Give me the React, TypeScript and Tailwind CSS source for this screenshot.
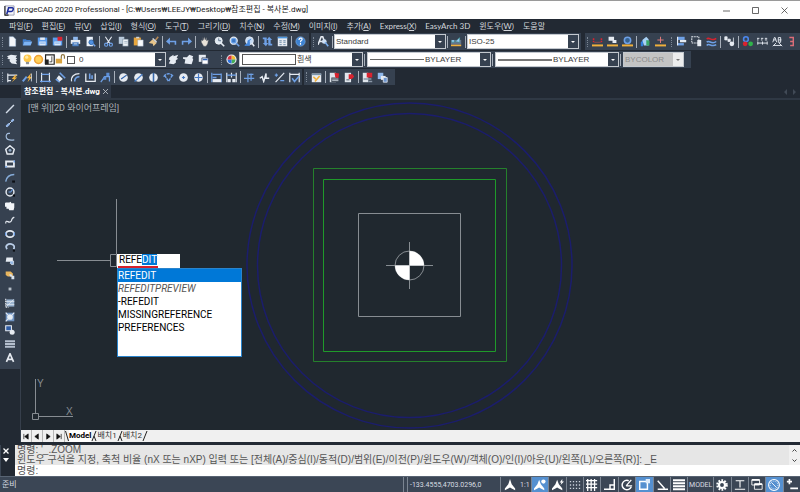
import { Fragment, useEffect, useRef } from "react";
import type { ReactNode } from "react";

const L = "#e6ebf2";
const B = "#6ea0e6";
const Y = "#f0b03c";
const R = "#d8232f";

// 14x14 glyphs, stroked by default
const glyphs: Record<string, ReactNode> = {
  new: <path d="M3 1h5l3 3v9H3z" fill="#f4f7fb" stroke="#b8d4f5" strokeWidth=".6" />,
  open: <><path d="M1 4h4l1 1h5v2H3l-2 5z" fill="#3f7fd0" /><path d="M3 7h10l-2 5H1z" fill="#7db4f5" /></>,
  save: <><path d="M1 2h12v10H1z" fill="#5b9cec" /><path d="M4 2h6v3H4z" fill={L} /><path d="M3 7h8v5H3z" fill="#dbe8f8" /><path d="M4 9h6" stroke="#5b9cec" /></>,
  saveAs: <><path d="M1 2h12v10H1z" fill="#5b9cec" /><path d="M3 7h8v5H3z" fill="#dbe8f8" /><path d="M4 9h6" stroke="#5b9cec" /><path d="M7 1h6v5H7z" fill={R} /></>,
  print: <><path d="M4 1h6v4H4z" fill="#8fb9ee" /><path d="M1 5h12v5H1z" fill={L} /><path d="M3 8h8v5H3z" fill="#4e82c4" /><path d="M5 10h4" stroke={L} /></>,
  preview: <><path d="M2 1h8v12H2z" fill="#e9f1fb" /><circle cx="8" cy="8" r="3" fill="#4f90e2" stroke="#245a9c" /><path d="M10 10l3 3" stroke={B} strokeWidth="2" /></>,
  cut: <><path d="M3 1l6 9M11 1L5 10" stroke={L} strokeWidth="1.4" /><circle cx="4" cy="11" r="2" stroke={B} strokeWidth="1.5" /><circle cx="10" cy="11" r="2" stroke={B} strokeWidth="1.5" /></>,
  copy: <><path d="M1 1h7v9H1z" fill="#b9cadb" /><path d="M6 4h7v9H6z" fill="#edf2f7" stroke="#5c7188" strokeWidth=".6" /><path d="M8 7h4M8 9h4" stroke="#7d93aa" strokeWidth=".7" /></>,
  paste: <><path d="M1 2h9v10H1z" fill="#e8a63e" /><path d="M4 1h4v2H4z" fill="#ccd2d8" /><path d="M6 5h7v8H6z" fill="#f8fafc" stroke="#8aa0b8" strokeWidth=".5" /></>,
  brush: <><path d="M13 1L9 6" stroke="#b88a55" strokeWidth="2" /><path d="M6 4l5 5-4 4-1-3-5-1z" fill="#e7c58a" /><path d="M6 3l5 5" stroke="#d8e0ea" strokeWidth="1.5" /></>,
  undo: <path d="M5 2L0 7l5 4V8h6v3h2V6H5z" fill={B} />,
  redo: <path d="M9 2l5 5-5 4V8H3v3H1V6h8z" fill={B} />,
  pan: <path d="M3 8V5l2 1V2l1 3 1-4 1 4 1.5-3v4L12 5l-1 5-2 3H6z" fill="#e8e2d9" stroke="#565c66" strokeWidth=".5" />,
  zoomRt: <><circle cx="6" cy="6" r="4.5" fill="#dfe8f2" stroke="#f5f8fb" /><path d="M6 3v3h3" stroke="#4b617b" /><path d="M9 9l4 4" stroke={L} strokeWidth="2" /></>,
  zoomWin: <><circle cx="6" cy="6" r="4.5" fill="#6fa7ee" stroke={L} strokeWidth="1.5" /><path d="M4 4h4v4H4z" fill="#3d77c2" /><path d="M9 9l4 4" stroke={B} strokeWidth="2" /></>,
  zoomPrev: <><circle cx="7" cy="6" r="5" fill="#c6dbf4" stroke={L} /><path d="M5 9V6l4-2M1 12l6-5v5z" fill="#4587dd" stroke="#4587dd" /><path d="M10 9l3 4" stroke={L} strokeWidth="2" /></>,
  orbit: <path d="M1 2h5v7h2l-3 4-4-4h2V4H1zM13 12H8V5H6l3-4 4 4h-2v5h2z" fill={B} />,
  table: <><path d="M1 1h12v12H1z" fill={L} /><path d="M1 2h12" stroke="#4b95dd" strokeWidth="2" /><path d="M3 6h3M8 6h3M3 8h3M8 8h3M3 11h3M8 11h3" stroke="#557a9d" /></>,
  help: <><circle cx="7" cy="7" r="6" fill="#3c82d2" stroke="#9bc3f0" strokeWidth=".6" /><path d="M5 5c0-3 4-3 4-1 0 2-2 1-2 4M7 9v2" stroke="#fff" strokeWidth="1.5" /></>,
  textStyle: <><path d="M0 11L4 1h2l3 8M2 7h5" stroke={L} strokeWidth="2" /><circle cx="8" cy="7" r="3" fill="#cfe0f5" /><path d="M9 8l4 5" stroke="#78aef0" strokeWidth="2" /></>,
  dimStyle: <><path d="M0 5h13v6H0z" fill="#64748b" /><path d="M1 5v3h3V5M6 7l5-5v6z" fill="#9cc4f4" stroke="#2a9f8b" strokeWidth=".6" /><path d="M0 12h13" stroke={Y} strokeWidth="2" /></>,
  xline: <><path d="M2 3v5M12 3v5" stroke={R} strokeWidth="2" strokeDasharray="2 1" /><path d="M3 8h8" stroke="#9a4b52" /><path d="M0 12h14" stroke={Y} strokeWidth="2.5" /></>,
  xblock: <><path d="M2 1h7v4h3v4H7V6H2z" fill={L} /><path d="M0 12h14" stroke={Y} strokeWidth="2.5" /></>,
  xring: <><circle cx="7" cy="5.5" r="4" fill="#35618f" stroke={B} strokeWidth="2" /><path d="M0 12h14" stroke={Y} strokeWidth="2.5" /></>,
  house: <><path d="M1 8l3-3v8H1z" fill="#317fdb" /><path d="M3 5l5-4 3 3v8H5z" fill="#a8d1f5" /><path d="M8 5l4 1v6H8z" fill="#3aa76b" /></>,
  xpoint: <><path d="M7 1v8M3 5h8" stroke="#dc7a7a" strokeWidth="1.3" /><path d="M0 12h14" stroke={Y} strokeWidth="2.5" /></>,
  pages: <><path d="M2 1h9v4H2z" fill={B} /><path d="M5 5h8v3H5z" fill={L} /><path d="M2 9h8v3H2z" fill={B} /><path d="M2 1v11" stroke={L} strokeWidth="1.5" /></>,
  group: <><path d="M1 1h9v8H1z" stroke={L} strokeWidth="1.3" strokeDasharray="2 1" /><path d="M8 5h5v8H8z" fill={L} /></>,
  waves: <><path d="M1 4c3-4 6 4 12-1" stroke={R} strokeWidth="2" /><path d="M1 8c3-4 6 4 12-1M1 12c3-4 6 3 12-1" stroke={B} strokeWidth="2" /></>,
  nodes: <><path d="M1 1h3v4H1zM5 4h3v3H5zM12 2v7" fill={L} stroke={L} /><circle cx="10" cy="10" r="3" fill={L} /></>,
  rgb: <><circle cx="5" cy="4" r="3" stroke="#4b87ee" strokeWidth="2" /><circle cx="4" cy="10" r="3" fill={R} /><circle cx="11" cy="10" r="3" fill="#2fb34a" /></>,
  align: <path d="M0 3h3M5 3h3M10 3h3M0 5h2M5 5h2M10 5h3M1 9h12M1 7v4M7 7v4M13 7v4" stroke={L} strokeWidth="1.2" />,
  swap: <path d="M1 8l2-6h1l2 6M2 5h3M8 2h3v6H8zM8 5h4M1 13l4-4M13 13L9 9M2 12h10" stroke={L} strokeWidth="1.2" />,
  hook: <path d="M3 2h5v5H4M8 8v4H4" stroke="#dc6d78" strokeWidth="1.8" />,
  layers: <path d="M0 3l5-2 8 1-2 2 2 2-2 1 2 2-2 1 2 3-7-1-3-3 1-2-4-1 2-1z" fill={L} />,
  bulb: <><circle cx="7" cy="5.5" r="5" fill="#ffc84a" /><circle cx="6" cy="4" r="2" fill="#ffe9a8" /><path d="M5 10h4v3H5z" fill="#8e9297" /></>,
  sun: <circle cx="7" cy="7" r="5" fill="#ffd15b" stroke="#f0a238" strokeWidth="2" />,
  viewport: <><path d="M2 1h11v12H2z" fill="#fff" stroke="#222" strokeWidth="1.5" /><path d="M1 7h5v6H1z" fill="#222" /><path d="M10 3v7H7" stroke="#222" /></>,
  unlock: <><path d="M1 6h8v6H1z" fill="#d9a441" /><path d="M8 6V3c0-3 4-3 4 0v3" stroke="#8e763f" strokeWidth="1.5" /></>,
  layA: <path d="M2 4l5-3v2l6-2-2 4 2 1-3 2v3l-3 2-6-1 2-4-2-1z" fill={L} />,
  layB: <path d="M0 4h5l3-3 5 2-1 2 1 2-2 6-9-1 1-5-3-1z" fill={L} />,
  layC: <><path d="M1 1h9v9H1z" fill={L} /><path d="M5 5h8v8H5z" fill="#fff" stroke="#2e3c58" /><path d="M6 7h6" stroke="#3265b8" strokeWidth="2" /></>,
  color: <><circle cx="7" cy="7" r="6.5" fill="#e9edf1" /><path d="M7 7V2a5 5 0 015 5z" fill="#f4bd31" /><path d="M7 7h5a5 5 0 01-5 5z" fill="#45ad58" /><path d="M7 7v5a5 5 0 01-5-5z" fill="#2e72dc" /><path d="M7 7H2a5 5 0 015-5z" fill="#d63645" /></>,
  dimQuick: <><path d="M1 2v11M1 4h12M1 11h4" stroke={L} strokeWidth="1.5" /><path d="M10 4L6 9h3l-3 4 7-6h-3l3-3z" fill={Y} /></>,
  dimFast: <><path d="M1 12l5-6" stroke={B} strokeWidth="2.5" /><path d="M12 1L6 8h3l-2 5 6-7h-3z" fill={Y} /><path d="M12 2v10" stroke={L} /></>,
  dimLin: <><path d="M2 1v12M12 1v12" stroke={L} strokeWidth="1.5" /><path d="M2 3h10M0 12h14" stroke={B} strokeWidth="1.7" /></>,
  dimAli: <><path d="M1 9l5 4M6 1l7 7" stroke={B} strokeWidth="2" /><path d="M5 4l5 5-4 3-4-4z" fill={L} /></>,
  dimArc: <><path d="M2 12C1 6 5 2 12 2" stroke={L} strokeWidth="1.5" /><path d="M6 12c0-4 2-6 6-6" stroke={B} strokeWidth="2" /></>,
  dimOrd: <><path d="M1 2v10h12V2" stroke={L} strokeWidth="1.6" /><path d="M6 2v7M9 4v5" stroke={B} strokeWidth="2" /></>,
  dimJog: <><path d="M1 13l5-7h6v6" stroke={B} strokeWidth="1.6" /><path d="M8 1h4v4H8zM4 6h4v4H4z" fill="#5d8fd8" /></>,
  diaA: <><circle cx="7" cy="7" r="5.5" fill={L} /><path d="M4 9l7-5" stroke="#2b5fa8" strokeWidth="1.5" /></>,
  diaB: <><circle cx="7" cy="7" r="5.5" fill={L} /><path d="M2 12L12 3" stroke="#4a7fc8" strokeWidth="1.7" /></>,
  diaC: <><circle cx="7" cy="7" r="5.5" fill={L} /><path d="M7 1v12" stroke="#3567aa" strokeWidth="2" /></>,
  angle: <path d="M2 4l5 8 5-8M1 6c2-5 10-5 12 0" stroke={B} strokeWidth="1.8" strokeDasharray="4 1" />,
  center: <><circle cx="7" cy="7" r="5.5" fill={L} /><path d="M7 5v4M5 7h4" stroke="#4679c2" strokeWidth="1.5" /></>,
  cross: <><circle cx="7" cy="7" r="5.5" fill={L} /><path d="M7 2v10M2 7h10" stroke="#4679c2" strokeWidth="1.5" /></>,
  base: <><path d="M1 1v12M13 2v11" stroke={B} strokeWidth="1.5" /><path d="M2 3h11M2 7h5" stroke={B} strokeWidth="1.7" /><path d="M2 9h11v4H2z" fill={L} /></>,
  cont: <><path d="M1 1v12M13 1v12M7 1v6" stroke={L} strokeWidth="1.5" /><path d="M1 4h12" stroke={B} strokeWidth="1.7" /><path d="M2 9h4v4H2zM8 9h4v4H8z" fill={L} /></>,
  brk: <><path d="M0 8h13M5 2v11" stroke={B} strokeWidth="1.5" /><path d="M9 2v9M6 3h6" stroke={B} strokeWidth="1.5" /></>,
  tol: <path d="M1 8l3-2 2 6 3-10v6h4" stroke={L} strokeWidth="1.8" />,
  ratio: <><path d="M2 13L13 1" stroke={L} strokeWidth="1.5" /><path d="M1 4h4M3 2v4M8 11h5" stroke={B} strokeWidth="1.5" /></>,
  inspect: <><path d="M1 1v12M13 1v12M1 3h12" stroke={L} strokeWidth="1.5" /><path d="M4 8l3 4 6-7" stroke={B} strokeWidth="2" /></>,
  note: <><path d="M1 2h12v11H1z" fill={L} /><path d="M1 3h12" stroke="#7a94aa" strokeWidth="2" /><path d="M5 12l6-7M3 6l3 3" stroke={Y} strokeWidth="2" /></>,
  refA: <><path d="M1 1h8v12H1z" fill="#dfe5ec" /><path d="M3 7h10v6H3z" fill="#36404d" /><path d="M7 1l6 1-1 6-4-1z" fill={R} /><path d="M4 9h8M4 11h8" stroke={L} /></>,
  refB: <><path d="M1 1h8v12H1z" fill="#dfe5ec" /><path d="M6 3h5l2 3-3 3H6z" fill={R} /><path d="M3 10h4" stroke="#2d3947" /></>,
  refC: <><path d="M1 1h7v12H1z" fill="#dfe5ec" /><path d="M6 1h7v6H6z" fill={R} /><path d="M2 9h10M8 12h5" stroke="#8b98a8" strokeWidth="2" /></>,
  refD: <><path d="M1 1h7v8H1z" fill="#8fb7ea" /><path d="M5 5h6v5H5z" fill={L} /><path d="M8 7h5v6H8z" fill="#6b94ce" stroke={L} /></>,
  line: <path d="M1.5 12.5L12.5 1.5" stroke="#d3dce8" strokeWidth="2" />,
  ray: <><path d="M1.5 12.5L12.5 1.5" stroke="#c7d3e2" strokeWidth="1.4" /><path d="M9 5l3-3M2 12l4-4" stroke="#93b6e8" strokeWidth="3" /></>,
  pline: <path d="M7 2C2 1 1 5 2 8s4 4 11 3" stroke="#a5bfdf" strokeWidth="1.6" />,
  poly: <><path d="M7 1l6 5-2 6.5H3L1 6z" stroke={L} strokeWidth="2" /><circle cx="7" cy="7.5" r="2" fill="#93acc8" /></>,
  rect: <><path d="M1.5 3.5h11v7h-11z" stroke={L} strokeWidth="2.5" /><path d="M13 2v3M0 11h3" stroke={B} strokeWidth="2" /></>,
  arc: <><path d="M1 12C2 6 6 2 13 2" stroke="#86acd9" strokeWidth="2" /><path d="M10 12h4" stroke="#0c0f14" strokeWidth="3" /></>,
  circle: <><circle cx="7" cy="7" r="5.5" stroke={L} strokeWidth="2" /><path d="M5 7h3l3-4" stroke={B} strokeWidth="1.5" /><path d="M11 12h3" stroke="#0c0f14" strokeWidth="3" /></>,
  cloud: <path d="M1 2h5l2-1 1 2h4v6l-1 4H6l-1-2H2V8H0V3z" fill="#f2f5f9" />,
  spline: <path d="M1 12c0-8 5 2 8-4 1-3 0-3 4-5" stroke={L} strokeWidth="1.7" />,
  ellipse: <><ellipse cx="7" cy="7" rx="5.5" ry="4.5" stroke={L} strokeWidth="2.5" /><path d="M1 5v4M13 5v4" stroke={B} strokeWidth="2" /></>,
  ellArc: <><path d="M3 10C-1 5 5 2 9 3s5 4 3 7" stroke="#b9cde8" strokeWidth="2.5" /><path d="M11 12h3" stroke="#0c0f14" strokeWidth="3" /></>,
  insert: <><path d="M2 2h9v6H1z" fill={L} /><path d="M7 7h5v5H9l-2-2" fill="#95b8e5" stroke={L} /></>,
  block: <><path d="M1 2h7l3 3v4H4L1 7z" fill="#e9b65e" /><path d="M6 6h3l1 2h3v5H9V9H7z" fill="#d8e3ef" /></>,
  point: <path d="M5 5h4v4H5z" fill="#b4bdc8" />,
  hatch: <><path d="M2 2h11v10H2z" fill="#9ab3d1" /><path d="M2 12L12 2M1 5h12M1 9h12" stroke={L} /><path d="M1 1v12h4" stroke={L} strokeWidth="1.5" strokeDasharray="2 1" /></>,
  gradient: <><path d="M1 1h12v12H1z" fill="#6f93c1" /><circle cx="7" cy="7" r="4" fill="#e5ecf4" /><path d="M1 1l3 3M13 1l-3 3M1 13l3-3" stroke={L} strokeWidth="1.5" /></>,
  region: <><path d="M1 1h8v7H1z" fill="#2f5da6" stroke={L} strokeWidth="1.5" /><circle cx="10" cy="10" r="3.5" fill={L} /></>,
  grid: <path d="M0 3h14M0 7h14M0 11h14" stroke="#b5c0cf" strokeWidth="2.8" />,
  text: <path d="M2 12.5L7 1l5 11.5M4 9h6" stroke={L} strokeWidth="2.3" />,
  north: <path d="M7 0l2 6 4 5v2l-4-2-2-1-2 1-4 2v-2l4-5z" fill="#fff" />,
  northDot: <><path d="M6 1l2 5 4 5v2l-4-2-2-1-2 1-4 2v-2l4-5z" fill="#fff" /><circle cx="11" cy="3" r="2.5" fill="#fff" /></>,
  northBolt: <><path d="M6 1l2 5 4 5v2l-4-2-2-1-2 1-4 2v-2l4-5z" fill="#fff" /><path d="M12 0L9 4h2l-1 3 4-4h-2z" fill="#fff" /></>,
  dots: <path d="M1 3h12M1 7h12M1 11h12" stroke="#cbd2dc" strokeWidth="1.5" strokeDasharray="1.5 2" />,
  mesh: <path d="M2 0v14M6 0v14M10 0v14M0 2h13M0 6h13M0 10h13" stroke="#fff" strokeWidth="1.5" />,
  ortho: <path d="M12 0v12H0M7 12V7h5" stroke="#fff" strokeWidth="1.7" />,
  polar: <><path d="M9 2a5.5 5.5 0 103 7" stroke="#fff" strokeWidth="1.7" /><path d="M6 8l6-7M6 8h7" stroke="#fff" strokeWidth="1.5" /></>,
  snap: <><path d="M2 3h9v9H2z" stroke="#fff" strokeWidth="1.7" /><path d="M9 0h5v5H9z" fill="#dcebfb" /></>,
  track: <path d="M2 2l8 9M2 12h12" stroke="#fff" strokeWidth="1.7" />,
  weight: <path d="M0 1.5h14M0 5h14M0 8.5h14M0 12h14" stroke="#fff" strokeWidth="2.3" />,
  gear: <><circle cx="7" cy="7" r="5.5" stroke="#fff" strokeWidth="2.5" strokeDasharray="2 1.5" /><circle cx="7" cy="7" r="3.5" stroke="#fff" strokeWidth="2.5" /></>,
  tee: <path d="M2 2h10M7 2v8M1 12h12" stroke="#fff" strokeWidth="1.3" />,
  windows: <><path d="M1 1h9v6H1zM4 6h9v6H4z" fill="#364252" stroke="#fff" /><path d="M1 1h9M4 6h9" stroke="#fff" strokeWidth="2" /></>,
  clock: <><circle cx="7" cy="7" r="6.3" stroke="#fff" strokeWidth="1.2" /><circle cx="7" cy="7" r="4.5" stroke="#fff" strokeDasharray="1 1.5" /><path d="M4 4l6 6" stroke="#fff" /></>,
  plusBar: <path d="M4 0v6M1 3h6M5 11h9" stroke="#fff" strokeWidth="2" />,
};

const Icon = ({ name, className = "size-3" }: { name: string; className?: string }) => (
  <svg viewBox="0 0 14 14" fill="none" className={`shrink-0 ${className}`} aria-hidden="true">
    {glyphs[name]}
  </svg>
);

const Sep = () => <span className="mx-px h-3 w-px shrink-0 bg-[#a7afba]" />;

const Grip = () => (
  <span className="mx-0.5 h-2.5 w-0 shrink-0 border-l border-dotted border-[#7c8795]" />
);

// "|" is a separator, everything else a glyph name
const Tools = ({ items }: { items: string }) => (
  <>
    {items.split(" ").map((item, i) =>
      item === "|" ? (
        <Sep key={i} />
      ) : (
        <button key={i} type="button" aria-label={item} className="flex w-[15px] shrink-0 justify-center">
          <Icon name={item} className="size-[11px]" />
        </button>
      )
    )}
  </>
);

const Panel = ({ children, className = "" }: { children: ReactNode; className?: string }) => (
  <div className={`flex h-full shrink-0 items-center bg-[#364150] ${className}`}>{children}</div>
);

interface ComboProps {
  label: string;
  value: string;
  className: string;
  before?: ReactNode;
  disabled?: boolean;
}

const Combo = ({ label, value, className, before, disabled }: ComboProps) => (
  <div
    className={`relative flex h-[15px] shrink-0 items-center border border-[#c3c8ce] ${className} ${
      disabled ? "bg-[#c4c4c4] text-[#8d8d8d]" : "bg-white text-[#3a3a3a]"
    }`}
  >
    {before}
    <select
      aria-label={label}
      disabled={disabled}
      className="h-full min-w-0 flex-1 appearance-none pl-px font-['Liberation_Sans','Noto_Sans_CJK_KR',sans-serif] text-[8px] leading-[13px] outline-none"
    >
      <option>{value}</option>
    </select>
    <span
      className={`pointer-events-none flex h-full w-[10px] shrink-0 items-center justify-center ${
        disabled ? "bg-[#ededed] text-[#777]" : "bg-[#364150] text-white"
      }`}
    >
      <svg viewBox="0 0 4 2" className="h-0.5 w-1" fill="currentColor"><path d="M0 0h4L2 2z" /></svg>
    </span>
  </div>
);

const menus = [
  ["파일", "F"], ["편집", "E"], ["뷰", "V"], ["삽입", "I"], ["형식", "O"],
  ["도구", "T"], ["그리기", "D"], ["치수", "N"], ["수정", "M"], ["이미지", "I"],
  ["추가", "A"], ["Express", "X"], ["EasyArch 3D", ""], ["윈도우", "W"], ["도움말", ""],
];

const drawTools =
  "line ray pline poly rect arc circle cloud spline ellipse ellArc insert block point hatch gradient region grid text".split(" ");

const TitleBar = () => (
  <header className="flex h-[19px] items-center border-t border-[#9a9a9a] bg-white text-[#222]">
    <svg viewBox="0 0 12 12" className="mr-0.5 ml-1 size-[11px]" fill="none">
      <path d="M1 1h10v10H1z" fill="#f4f4f8" stroke="#9a9db0" />
      <path d="M3 10L5 3h4c2 0 1 4-1 4H4" stroke="#1c2c9c" strokeWidth="1.7" />
      <path d="M1 1v10h4" stroke="#222" strokeWidth="1.2" />
    </svg>
    <h1 className="text-[8px] leading-3">progeCAD 2020 Professional - [C:₩Users₩LEEJY₩Desktop₩참조편집 - 복사본.dwg]</h1>
    <div className="ml-auto flex pr-px">
      {["M0 4h7", "M.5 .5h6v6h-6z", "M.5 .5l6 6M6.5 .5l-6 6"].map((d, i) => (
        <button key={d} type="button" aria-label={["Minimize", "Maximize", "Close"][i]} className="flex w-[29px] justify-center">
          <svg viewBox="0 0 7 7" className="size-[7px]" fill="none" stroke="#444" strokeWidth=".8"><path d={d} /></svg>
        </button>
      ))}
    </div>
  </header>
);

const MenuBar = () => (
  <nav className="flex h-[14px] items-center gap-[9px] pl-[9px] font-['Lato','Noto_Sans_CJK_KR',sans-serif] text-[8px] leading-[10px] text-[#d3d7dc]">
    {menus.map(([name, key]) => (
      <button key={name} type="button" className="whitespace-nowrap">
        {name}
        {key && <>(<u>{key}</u>)</>}
      </button>
    ))}
  </nav>
);

const Toolbars = () => (
  <div className="flex flex-col gap-px">
    <div className="flex h-[17px]">
      <Panel className="w-[309px]">
        <Grip />
        <Tools items="new open save saveAs | print preview | cut copy paste brush | undo redo | pan zoomRt zoomWin zoomPrev | orbit table | help" />
      </Panel>
      <Panel className="ml-0.5 w-[270px]">
        <Grip />
        <Tools items="textStyle |" />
        <Combo label="Text style" value="Standard" className="w-[112px]" />
        <Tools items="| dimStyle |" />
        <Combo label="Dimension style" value="ISO-25" className="w-[112px]" />
      </Panel>
      <Panel className="ml-1 min-w-0 flex-1 overflow-hidden">
        <Grip />
        <Tools items="xline xblock xring | house xpoint" />
        <span className="w-2" />
        <Grip />
        <Tools items="pages group waves | nodes | rgb align swap hook" />
      </Panel>
    </div>
    <div className="flex h-[17px]">
      <Panel className="w-[691px]">
        <Grip />
        <Tools items="layers" />
        <Combo
          label="Layer"
          value="0"
          className="w-[146px]"
          before={
            <span className="flex pl-px">
              {["bulb", "sun", "viewport", "unlock"].map((n) => (
                <Icon key={n} name={n} className="size-[11px]" />
              ))}
              <span className="mt-0.5 mr-[3px] ml-px size-2 border border-[#555] bg-white" />
            </span>
          }
        />
        <Tools items="layA layB layC" />
        <span className="w-2" />
        <Grip />
        <Tools items="color" />
        <Combo label="Color" value="흰색" className="w-[124px]" before={<span className="ml-0.5 h-[11px] w-[54px] border border-[#555]" />} />
        <Sep />
        <Combo label="Linetype" value="BYLAYER" className="ml-px w-[124px]" before={<span className="ml-0.5 h-px w-[54px] bg-[#666]" />} />
        <Sep />
        <Combo label="Lineweight" value="BYLAYER" className="ml-px w-[124px]" before={<span className="ml-0.5 h-0.5 w-[54px] bg-[#777]" />} />
        <Sep />
        <Combo label="Plot style" value="BYCOLOR" className="ml-px w-[61px]" disabled />
      </Panel>
    </div>
    <div className="flex h-[16px]">
      <Panel className="w-[302px]">
        <Grip />
        <Tools items="dimQuick dimFast | dimLin dimAli dimArc dimOrd dimJog | diaA diaB diaC angle center cross | base cont | brk tol ratio inspect" />
      </Panel>
      <Panel className="ml-0.5 w-[91px]">
        <Grip />
        <Tools items="note | refA refB | refC refD" />
      </Panel>
    </div>
  </div>
);

const CommandPopup = () => {
  const input = useRef<HTMLInputElement>(null);

  useEffect(() => {
    input.current?.focus();
    input.current?.setSelectionRange(4, 7);
  }, []);

  return (
    <div className="absolute top-[154px] left-[96px] text-[10px] text-black">
      <input
        ref={input}
        aria-label="Command"
        defaultValue="REFEDIT"
        className="block h-[14px] w-[63px] bg-white px-0.5 pb-1 leading-[10px] outline-none selection:bg-[#0078d7] selection:text-white"
      />
      <span className="absolute top-3 left-px h-0.5 w-10 bg-[#d5202c]" />
      <ul className="flex h-[89px] w-[125px] flex-col border border-[#2a84cc] bg-white pb-6">
        {["REFEDIT", "REFEDITPREVIEW", "-REFEDIT", "MISSINGREFERENCE", "PREFERENCES"].map((name, i) => (
          <li key={name} className={`flex-1 leading-[13px] ${i === 0 ? "bg-[#0078d7] text-white" : ""} ${i === 1 ? "text-[#555] italic" : ""}`}>
            {name}
          </li>
        ))}
      </ul>
    </div>
  );
};

const Drawing = () => (
  <svg viewBox="0 0 779 330" preserveAspectRatio="xMinYMin slice" className="absolute inset-0 h-full w-full" fill="none">
    <g stroke="#1b1d6c" strokeWidth="1.5">
      <circle cx="388.5" cy="165.5" r="162.5" />
      <circle cx="388.5" cy="165.5" r="152" />
    </g>
    <path d="M292.5 68.5h193v193h-193z" stroke="#25802c" />
    <path d="M302.5 79.5h172v172h-172z" stroke="#1f9a2a" />
    <g stroke="#878d92">
      <path d="M337.5 113.5h102v103h-102z" />
      <circle cx="388.5" cy="165.5" r="14.5" />
      <path d="M365 165.5h47M388.5 142v47" />
      <path d="M36 160.5h53M95.5 99v55M89.5 154.5h6v12h-6z" />
      <path d="M14.5 279v34M18 316.5h34M11.5 313.5h6v6h-6z" />
    </g>
    <path d="M388.5 165.5V151a14.5 14.5 0 0114.5 14.5zM388.5 165.5V180a14.5 14.5 0 01-14.5-14.5z" fill="#fff" />
    <g className="fill-[#878d92] font-['Liberation_Sans'] text-[10px]">
      <text x="16" y="287">Y</text>
      <text x="45" y="315">X</text>
    </g>
  </svg>
);

const SheetTabs = () => (
  <div className="flex h-3 items-center bg-[#f0f0f0] text-[8px] leading-3 text-[#333]">
    {["M2 1v6M7 1L3 4l4 3z", "M6 1L2 4l4 3z", "M3 1l4 3-4 3z", "M7 1v6M2 1l4 3-4 3z"].map((d) => (
      <button key={d} type="button" aria-label="Scroll sheets" className="flex h-full w-[11px] items-center justify-center border-r border-[#b5b5b5]">
        <svg viewBox="0 0 9 8" className="h-[7px] w-2" fill="#111" stroke="#111" strokeWidth=".8"><path d={d} /></svg>
      </button>
    ))}
    {["Model", "배치1", "배치2"].map((name, i) => (
      <Fragment key={name}>
        {i === 0 && <svg viewBox="0 0 4 12" className="h-3 w-1" stroke="#222"><path d="M.5 1l3 10" /></svg>}
        <button type="button" className={`h-full ${i === 0 ? "bg-white font-bold text-black" : ""}`}>{name}</button>
        <svg viewBox="0 0 6 12" className="h-3 w-[6px]" stroke="#222" fill="none">
          <path d={i === 2 ? "M5 1L1 11" : "M5 1L1 11M3 6l2 5"} />
        </svg>
      </Fragment>
    ))}
  </div>
);

const CommandLine = () => (
  <div className="mt-[3px] flex h-[31px]">
    <div className="flex w-[15px] flex-col items-center gap-1 border-l border-[#3b4553] pt-[3px] pr-1">
      <button type="button" aria-label="Close command line">
        <svg viewBox="0 0 6 6" className="size-[6px]" stroke="#fff" strokeWidth="1.3"><path d="M.5 .5l5 5M5.5 .5l-5 5" /></svg>
      </button>
      <button type="button" aria-label="Command history">
        <svg viewBox="0 0 6 4" className="h-1 w-[6px]" fill="#fff"><path d="M0 0h6L3 4z" /></svg>
      </button>
    </div>
    <div className="min-w-0 flex-1 font-['Liberation_Sans','Noto_Sans_CJK_KR',sans-serif] text-[10px] leading-[10px] text-[#555]">
      <div className="flex h-5 justify-between bg-[#e6e6e6]">
        <div className="pl-0.5 whitespace-nowrap">
          <p>명령: '_.ZOOM</p>
          <p>윈도우 구석을 지정, 축척 비율 (nX 또는 nXP) 입력 또는 [전체(A)/중심(I)/동적(D)/범위(E)/이전(P)/윈도우(W)/객체(O)/인(I)/아웃(U)/왼쪽(L)/오른쪽(R)]: _E</p>
        </div>
        <div className="flex w-[11px] flex-col items-center justify-around bg-[#f0f0f0]">
          <svg viewBox="0 0 5 3" className="h-[3px] w-[5px]" stroke="#444" fill="none"><path d="M.5 2.5l2-2 2 2" /></svg>
          <svg viewBox="0 0 5 3" className="h-[3px] w-[5px]" stroke="#444" fill="none"><path d="M.5 .5l2 2 2-2" /></svg>
        </div>
      </div>
      <label className="flex h-[11px] bg-white pl-0.5 leading-3">
        명령:
        <input className="h-[11px] min-w-0 flex-1 outline-none" />
      </label>
    </div>
  </div>
);

const StatusBar = () => (
  <footer className="flex h-4 items-center border-t border-[#586473] bg-[#3b4655] text-[7px] leading-4 text-[#d9dde2]">
    <span className="flex-1 pl-0.5 text-[8px]">준비</span>
    <span className="h-full w-[5px] border-x border-[#7b8592]" />
    <span className="h-full w-[92px] pl-0.5">-133.4555,4703.0296,0</span>
    <button type="button" className="flex h-full w-[31px] items-center gap-1 border-l border-[#7b8592] pl-[3px] whitespace-nowrap">
      <Icon name="north" />
      1:1
    </button>
    <div className="flex h-full w-[269px]">
      {"northDot northBolt dots mesh ortho polar snap track weight MODEL gear tee windows clock plusBar".split(" ").map((name) =>
        name === "MODEL" ? (
          <button key={name} type="button" className="w-[26px] border-l border-[#7b8592] text-center">MODEL</button>
        ) : (
          <button
            key={name}
            type="button"
            aria-label={name}
            className={`flex flex-1 items-center justify-center border-l border-[#7b8592] ${
              ["northDot", "snap", "clock"].includes(name) ? "bg-[#5590d0]" : ""
            }`}
          >
            <Icon name={name} />
          </button>
        )
      )}
    </div>
  </footer>
);

const App = () => {
  return (
    <div className="flex min-h-screen flex-col bg-[#222933] font-['Roboto','Noto_Sans_CJK_KR',sans-serif]">
      <TitleBar />
      <MenuBar />
      <Toolbars />
      <div className="flex h-[13px] items-center text-[8px] leading-[13px] text-white">
        <div className="ml-[21px] flex h-full w-[90px] items-center justify-between bg-[#303947] px-[3px]">
          <span className="font-bold whitespace-nowrap">참조편집 - 복사본.dwg</span>
          <button type="button" aria-label="Close drawing">
            <svg viewBox="0 0 5 5" className="size-[5px]" stroke="#c5cad0" strokeWidth=".8"><path d="M0 0l5 5M5 0L0 5" /></svg>
          </button>
        </div>
        <svg viewBox="0 0 12 6" className="mr-1 ml-auto h-[6px] w-3" fill="#414a56"><path d="M3 0v6L0 3zM9 0v6l3-3z" /></svg>
      </div>
      <main className="flex flex-1">
        <aside className="w-5 shrink-0">
          <div className="flex h-[271px] flex-col bg-[#364150] py-1">
            {drawTools.map((name) => (
              <button key={name} type="button" aria-label={name} className="flex min-h-0 flex-1 items-center justify-center">
                <Icon name={name} className="size-[10px]" />
              </button>
            ))}
          </div>
        </aside>
        <div className="flex min-w-0 flex-1 flex-col border-l border-[#363f4b]">
          <div className="relative flex-1 border-t-2 border-[#2f3844] bg-[#20282f]">
            <Drawing />
            <p className="absolute top-0.5 left-[7px] text-[9px] leading-3 text-[#aeb4ba]">[맨 위][2D 와이어프레임]</p>
            <CommandPopup />
          </div>
          <SheetTabs />
        </div>
      </main>
      <CommandLine />
      <StatusBar />
    </div>
  );
};

export default App;
